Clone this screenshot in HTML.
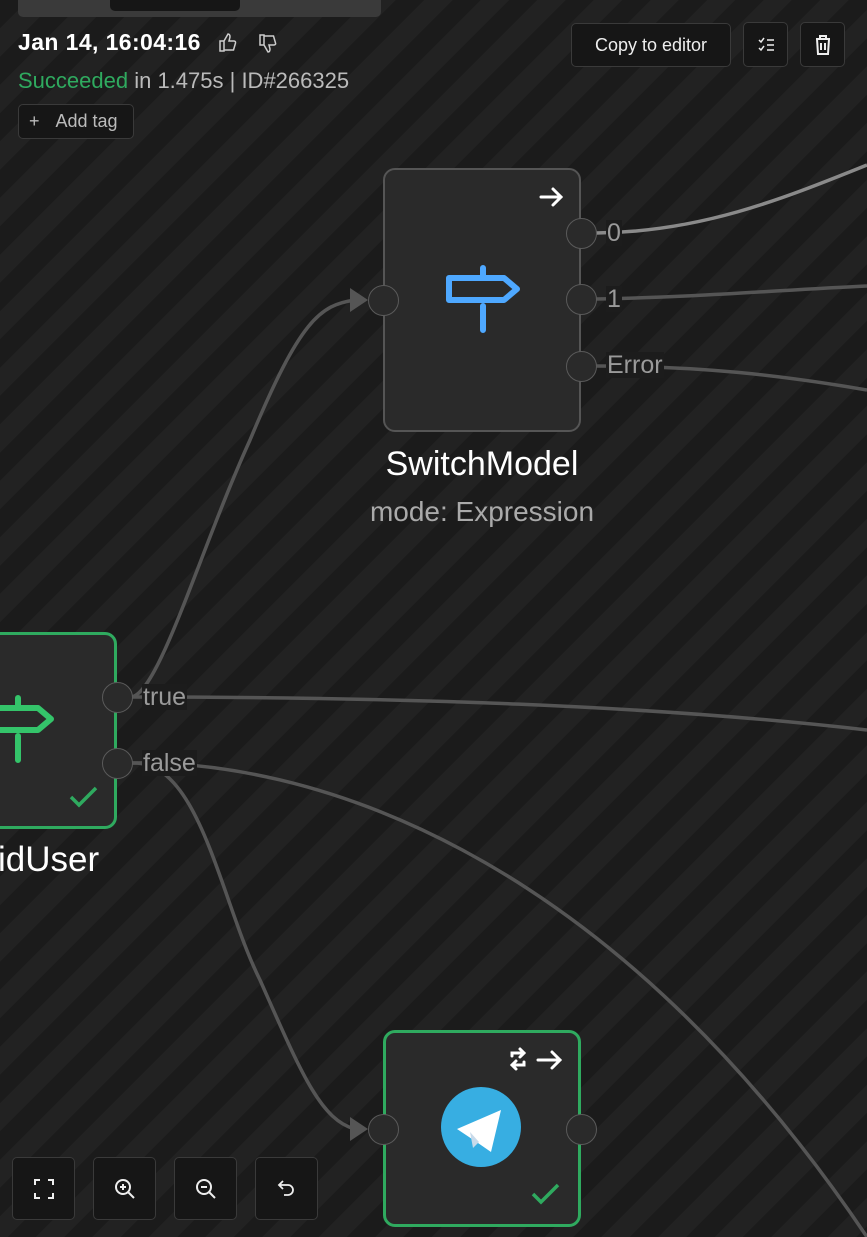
<!DOCTYPE html>
<html><head><meta charset="utf-8"><style>
*{margin:0;padding:0;box-sizing:border-box}
body{width:867px;height:1237px;overflow:hidden;position:relative;font-family:"Liberation Sans",sans-serif;
background:repeating-linear-gradient(135deg,#1b1b1b 0 20px,#222222 20px 40px);}
.abs{position:absolute}
.btn{position:absolute;border:1px solid #3a3a3a;background:#161616;border-radius:5px;display:flex;align-items:center;justify-content:center;color:#eee}
.node{position:absolute;background:#2a2a2a;border-radius:12px}
.h{position:absolute;width:31px;height:31px;border-radius:50%;background:#2a2a2a;border:1.5px solid #5a5a5a}
.lbl{position:absolute;color:#9a9a9a;font-size:25px;background:#1c1c1c;line-height:26px;padding:0 1px}
</style></head><body>
<svg class="abs" style="left:0;top:0" width="867" height="1237">
<g fill="none" stroke-width="3.5">
<path d="M596 233 C700 232 780 200 867 165" stroke="#8a8a8a"/>
<path d="M596 299 C700 297 780 290 867 286" stroke="#555"/>
<path d="M596 366 C700 366 780 375 867 390" stroke="#555"/>
<path d="M132 697 C160 690 200 550 250 440 C300 320 320 305 355 300" stroke="#555"/>
<path d="M132 697 C400 697 650 705 867 730" stroke="#555"/>
<path d="M132 763 C300 760 600 840 867 1237" stroke="#555"/>
<path d="M132 763 C200 760 220 900 260 980 C300 1070 320 1120 355 1129" stroke="#555"/>
</g>
<path d="M350 288 L368 300 L350 312Z" fill="#555"/>
<path d="M350 1117 L368 1129 L350 1141Z" fill="#555"/>
</svg>
<div class="abs" style="left:18px;top:-10px;width:363px;height:27px;background:#3a3a3a;border-radius:5px"></div>
<div class="abs" style="left:110px;top:-10px;width:130px;height:21px;background:#161616;border-radius:5px"></div>
<div class="abs" style="left:18px;top:29px;color:#fff;font-size:23px;font-weight:bold;letter-spacing:0.4px">Jan 14, 16:04:16</div>
<svg class="abs" style="left:218px;top:32px" width="60" height="22" fill="none" stroke="#ccc" stroke-width="1.5"><path d="M2 9h4v10H2zM6 9l4-7c2 0 2 2 2 3l-1 4h5c1 0 2 1 1.5 2l-2 7H6"/><path d="M42 13h4V3h-4zM46 13l4 7c2 0 2-2 2-3l-1-4h5c1 0 2-1 1.5-2l-2-7H46"/></svg>
<div class="abs" style="left:18px;top:68px;font-size:22px;color:#bbb"><span style="color:#2faa5f">Succeeded</span> in 1.475s <span style="color:#bbb">|</span> ID#266325</div>
<div class="btn" style="left:18px;top:104px;width:116px;height:35px;color:#bbb;font-size:18px;justify-content:flex-start;padding-left:10px"><span style="margin-right:16px">+</span>Add tag</div>
<div class="btn" style="left:571px;top:23px;width:160px;height:44px;font-size:18px">Copy to editor</div>
<div class="btn" style="left:743px;top:22px;width:45px;height:45px"><svg width="20" height="20" fill="none" stroke="#eee" stroke-width="1.5"><path d="M3 5l2 2 3-4M3 13l2 2 3-4M11 5h7M11 10h7M11 15h7"/></svg></div>
<div class="btn" style="left:800px;top:22px;width:45px;height:45px"><svg width="20" height="22" fill="none" stroke="#eee" stroke-width="2"><path d="M3 5h14M7 5V2h6v3M4 5l1 15h10l1-15M8 9v7M12 9v7"/></svg></div>

<div class="node" style="left:383px;top:168px;width:198px;height:264px;border:2px solid #555"></div>
<svg class="abs" style="left:538px;top:183px" width="28" height="28" fill="none" stroke="#fff" stroke-width="3" stroke-linecap="round"><path d="M3 14h20M15 6l8 8-8 8"/></svg>
<svg class="abs" style="left:440px;top:260px" width="90" height="80" fill="none" stroke="#4ea8ff" stroke-width="6" stroke-linecap="round" stroke-linejoin="round"><path d="M43 8v10M43 46v24M9 18h55l13 11-13 11H9z"/></svg>
<div class="h" style="left:368px;top:285px"></div>
<div class="h" style="left:566px;top:218px"></div>
<div class="h" style="left:566px;top:284px"></div>
<div class="h" style="left:566px;top:351px"></div>
<div class="lbl" style="left:606px;top:220px">0</div>
<div class="lbl" style="left:606px;top:286px">1</div>
<div class="lbl" style="left:606px;top:352px">Error</div>
<div class="abs" style="left:182px;width:600px;top:445px;text-align:center;color:#fff;font-size:34px">SwitchModel</div>
<div class="abs" style="left:182px;width:600px;top:496px;text-align:center;color:#aaa;font-size:28px">mode: Expression</div>

<div class="node" style="left:-40px;top:632px;width:157px;height:197px;border:3px solid #2faa5f"></div>
<svg class="abs" style="left:0px;top:690px" width="60" height="80" fill="none" stroke="#34c46a" stroke-width="6" stroke-linecap="round" stroke-linejoin="round"><path d="M18 8v10M18 46v24M-20 18h58l13 11-13 11h-58"/></svg>
<svg class="abs" style="left:68px;top:785px" width="32" height="26" fill="none" stroke="#2faa5f" stroke-width="3.5"><path d="M3 12l8 8 17-17"/></svg>
<div class="h" style="left:102px;top:682px"></div>
<div class="h" style="left:102px;top:748px"></div>
<div class="lbl" style="left:142px;top:684px">true</div>
<div class="lbl" style="left:142px;top:750px">false</div>
<div class="abs" style="left:-2px;top:840px;color:#fff;font-size:35px">idUser</div>

<div class="node" style="left:383px;top:1030px;width:198px;height:197px;border:3px solid #2faa5f"></div>
<svg class="abs" style="left:506px;top:1046px" width="60" height="28" fill="none" stroke="#fff" stroke-width="3" stroke-linecap="round"><path d="M6 10v-3h12M14 3l4 4-4 4M18 16v3H6M10 23l-4-4 4-4M32 14h22M46 6l8 8-8 8"/></svg>
<svg class="abs" style="left:441px;top:1087px" width="80" height="80"><circle cx="40" cy="40" r="40" fill="#37aee2"/><path d="M16 42l44-19-10 42-13-9z" fill="#fff"/><path d="M29 45l3 16 6-6z" fill="#c8daea"/></svg>
<svg class="abs" style="left:530px;top:1182px" width="32" height="26" fill="none" stroke="#2faa5f" stroke-width="3.5"><path d="M3 12l8 8 17-17"/></svg>
<div class="h" style="left:368px;top:1114px"></div>
<div class="h" style="left:566px;top:1114px"></div>

<div class="btn" style="left:12px;top:1157px;width:63px;height:63px"><svg width="22" height="22" fill="none" stroke="#eee" stroke-width="2"><path d="M2 7V2h5M15 2h5v5M20 15v5h-5M7 20H2v-5"/></svg></div>
<div class="btn" style="left:93px;top:1157px;width:63px;height:63px"><svg width="24" height="24" fill="none" stroke="#eee" stroke-width="2"><circle cx="10" cy="10" r="7"/><path d="M15 15l6 6M10 7v6M7 10h6"/></svg></div>
<div class="btn" style="left:174px;top:1157px;width:63px;height:63px"><svg width="24" height="24" fill="none" stroke="#eee" stroke-width="2"><circle cx="10" cy="10" r="7"/><path d="M15 15l6 6M7 10h6"/></svg></div>
<div class="btn" style="left:255px;top:1157px;width:63px;height:63px"><svg width="22" height="22" fill="none" stroke="#eee" stroke-width="1.8"><path d="M7 3L3 7l4 4M3 7h9a5 5 0 010 10H8"/></svg></div>
</body></html>
